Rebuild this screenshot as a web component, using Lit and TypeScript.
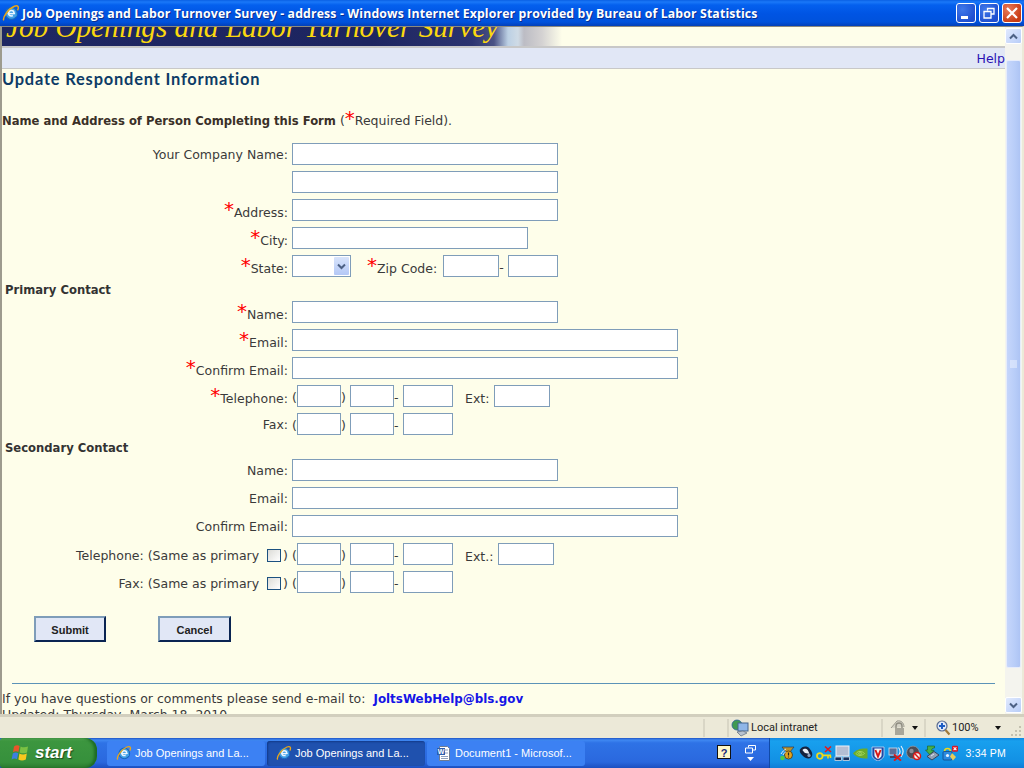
import { LitElement, html, css, svg } from "lit";
import { customElement } from "lit/decorators.js";

const ieIcon = (s: number) => html`<svg width=${s} height=${s} viewBox="0 0 16 16" class="ic">
  <circle cx="8.3" cy="8.4" r="5.3" fill="#3f9fe6" stroke="#1a66bd" stroke-width="1.1"/>
  <circle cx="8.3" cy="8.2" r="2.4" fill="none" stroke="#eaf6ff" stroke-width="1.4"/>
  <rect x="5" y="7.9" width="6.6" height="1.3" fill="#eaf6ff"/>
  <rect x="9.6" y="9.2" width="3.4" height="1.7" fill="#3f9fe6"/>
  <path d="M1.6 14.6C.2 12.2 5.6 4.2 11 2c3.2-1.2 4.4.6 2.8 3.6" fill="none" stroke="#eaa618" stroke-width="1.3"/>
</svg>`;

const flag = html`<svg width="20" height="18" viewBox="0 0 20 18" class="ic">
  <path d="M4 2.5C6 1 8 1 9.6 2L8.4 8C6.8 7 5 7 3 8.2z" fill="#e8552a"/>
  <path d="M10.6 2.4C13 3.6 15.4 3.4 18 2.4L17 8.4c-2.6 1.2-5 1.2-7.4 0z" fill="#7ac143"/>
  <path d="M2.8 9.4C4.8 8.2 6.6 8.2 8.2 9.2L7 15.2C5.4 14.2 3.6 14.2 1.6 15.4z" fill="#3d7fe0"/>
  <path d="M9.4 9.6c2.4 1.2 4.8 1.2 7.4 0L15.8 15.6c-2.6 1.2-5 1.2-7.4 0z" fill="#f7c81e"/>
</svg>`;

const wordIcon = html`<svg width="16" height="16" viewBox="0 0 16 16" class="ic">
  <path d="M3.5 1.5h8l2 2v12h-10z" fill="#fff" stroke="#6d7c94"/>
  <path d="M9 5h3M9 8h3M5 11.5h7M5 13.5h7" stroke="#8fa0bd"/>
  <rect x="1" y="3" width="8" height="7" fill="#2c5fb0"/>
  <text x="5" y="9" font-size="7" font-weight="bold" font-family="Liberation Sans" text-anchor="middle" fill="#fff">W</text>
</svg>`;

const chevDown = html`<svg width="9" height="7"><path d="M1 1.5l3.5 3.5L8 1.5" fill="none" stroke="#4d6185" stroke-width="2"/></svg>`;
const chevUp = html`<svg width="9" height="7"><path d="M1 5.5L4.5 2 8 5.5" fill="none" stroke="#4d6185" stroke-width="2"/></svg>`;

const trayIcons = [
  svg`<path d="M2 2h12l-4 5v5H6V7z" fill="#b8912c" stroke="#2a3a5a" stroke-width=".7"/><circle cx="8.5" cy="10" r="4" fill="#e2a520" stroke="#3a2a10" stroke-width=".7"/><path d="M8.5 7.5v3M8.5 11.5v1" stroke="#222" stroke-width="1.2"/><circle cx="2.5" cy="13" r="2.3" fill="#4cc94c"/><path d="M1 9c2-3 3-4 5-5M3 10c1-2 2-3 3-3" stroke="#dfe8f6" fill="none"/>`,
  svg`<path d="M2 4.5C4 1 9 .5 11.5 3.5 14 6.5 15.5 10 13 12.5c-2.5 2-6 .5-8-1.5S1 7 2 4.5z" fill="#16233e"/><path d="M4.4 5C6 3 9 3.4 10 5.4l1.5 3.4C9 8 7.4 8.6 6.4 7.4z" fill="#e8eef6"/><circle cx="11" cy="10.4" r="1.6" fill="#8ea4c4"/>`,
  svg`<circle cx="3.8" cy="11" r="2.8" fill="none" stroke="#f0d818" stroke-width="1.8"/><path d="M6.5 10.4h8.5M12 10.6v3M14.5 10.6v2.4" stroke="#f0d818" stroke-width="1.6"/><path d="M9 1.5l6 5.5M15 1.5L9 7" stroke="#e81818" stroke-width="1.6"/>`,
  svg`<rect x="2" y="1" width="13" height="10" fill="#b4bfd4" stroke="#eef2f8"/><rect x="1" y="12" width="6.5" height="3.6" fill="#16315e" stroke="#eef2f8" stroke-width=".7"/><rect x="9" y="12" width="6.5" height="3.6" fill="#16315e" stroke="#eef2f8" stroke-width=".7"/>`,
  svg`<path d="M1 8.5C4 4 10 3 15.5 3.5v10C10 13.6 5 13 1 8.5z" fill="#6bab2c"/><path d="M4 8.5C6 6 10 5.6 12.5 8.5 10 11 6 11 4 8.5z" fill="none" stroke="#a8d85c"/><path d="M6.5 8.5c1-1.2 2.6-1.2 3.6 0-1 1.1-2.6 1.1-3.6 0z" fill="none" stroke="#a8d85c"/>`,
  svg`<path d="M2 2h12v8c0 3-3.5 5-6 6-2.5-1-6-3-6-6z" fill="#1c4aa8" stroke="#d8e4f8" stroke-width=".7"/><path d="M4.4 3.5h7.2v6.4c0 2-2 3.4-3.6 4.2-1.6-.8-3.6-2.2-3.6-4.2z" fill="#f2f2f2"/><path d="M5.4 5l2.6 6.4L10.6 5" fill="none" stroke="#d81818" stroke-width="1.9"/>`,
  svg`<rect x="1" y="3" width="8" height="7" fill="#5a6f98" stroke="#d8dfec" stroke-width=".8"/><rect x="2" y="11" width="7" height="2" fill="#3a4a6a"/><path d="M10.5 2.5c2 2.5 2 5.5 0 8M13 1c2.6 3.4 2.6 7.6 0 11" fill="none" stroke="#eef3fa" stroke-width="1.1"/><path d="M6 9.5l7 6.2M13 9.5l-7 6.2" stroke="#e01818" stroke-width="1.8"/>`,
  svg`<circle cx="7" cy="7.5" r="6.4" fill="#4c4c56" stroke="#9aa0ac" stroke-width=".7"/><circle cx="5.5" cy="6" r="2.2" fill="#8a8e98"/><circle cx="11" cy="11" r="3.5" fill="#f6f0f0" stroke="#d81818" stroke-width="1.5"/><path d="M8.8 8.8l4.4 4.4" stroke="#d81818" stroke-width="1.5"/>`,
  svg`<path d="M3.5 1v4h-2l4.5 5 4-4.6H7.6C7.6 3.6 9 3 10.5 3V1z" fill="#46b04a" stroke="#1d5c20" stroke-width=".6"/><path d="M3 11.5l7-5 5 3.5-7 5z" fill="#93a0b4" stroke="#2c3444" stroke-width=".8"/><path d="M7 11l3-2" stroke="#dfe6f0"/>`,
  svg`<path d="M2.5 6.5a3 3 0 0 1 6 0" fill="none" stroke="#f0d818" stroke-width="1.6"/><rect x="1" y="6.5" width="9" height="8.5" rx="1" fill="#2a8ae0" stroke="#123e78" stroke-width=".7"/><circle cx="5.5" cy="10.5" r="1.6" fill="#e8f2ff"/><path d="M10 8l4 4-3 3.5-3-4z" fill="#e8cc5a"/><rect x="10" y="0.8" width="6" height="6" rx="1.2" fill="#d81828"/><path d="M11.6 2.4l2.8 2.8M14.4 2.4l-2.8 2.8" stroke="#fff" stroke-width="1.1"/>`,
];

const star = html`<span class="req">*</span>`;
const input = (cls: string) => html`<span class="in ${cls}"></span>`;
const phone = () => html`<span class="ph"><span class="paren">(</span>${input("w44")}<span class="paren close">)</span>${input("w44")}<span class="dash">-</span>${input("w50")}</span>`;

@customElement("app-root")
export class AppRoot extends LitElement {
  static styles = css`
    :host { display: block; width: 1024px; height: 768px; overflow: hidden; font-family: "DejaVu Sans", Verdana, sans-serif; font-size: 12.5px; color: #3a3a3a; }
    .win { display: flex; flex-direction: column; height: 768px; }
    .ic { display: block; flex: none; }

    .title { height: 26px; flex: none; display: flex; align-items: center; padding-left: 2px; gap: 2px; color: #fff; font: bold 12.3px "Open Sans", "DejaVu Sans", sans-serif;
      background: linear-gradient(#0a60e4 0, #1a78f8 2px, #0460ee 5px, #0054e3 14px, #0052dc 22px, #0340b8 26px); }
    .title .txt { flex: 1; text-shadow: 1px 1px 0 #0a2f90; white-space: nowrap; letter-spacing: .13px; }
    .wb { display: flex; gap: 3px; padding-right: 2px; }
    .btn { width: 20px; height: 20px; border: 1px solid #fff; border-radius: 3px; box-sizing: border-box; background: radial-gradient(circle at 30% 30%, #3f78ea, #1f4fd0 75%); display: flex; }
    .btn.x { background: radial-gradient(circle at 30% 30%, #e87a5a, #c83c14 75%); }

    .main { flex: 1; display: flex; min-height: 0; background: #fefeea; border-top: 1px solid #8c8a7e; border-left: 2px solid #9d9b8e; border-right: 2px solid #ece9d8; }
    .page { flex: 1; min-width: 0; position: relative; overflow: hidden; display: flex; flex-direction: column; }
    .banner { height: 19px; flex: none; display: flex; overflow: hidden; }
    .banner .img { width: 560px; flex: none; background: linear-gradient(90deg, #1f2762 0, #1d2560 370px, #2c3470 470px, #4a5284 492px, #bcd0e4 506px, #cfdbe6 516px, #bcbcc4 522px, #d4d2d2 540px, #fefeea 560px); color: #fbd80e; font: italic 29.2px/1 "Liberation Serif", serif; white-space: nowrap; padding-left: 4px; box-sizing: border-box; overflow: hidden; }
    .banner .img span { display: block; margin-top: -14px; }
    .nav { height: 20px; flex: none; background: #e1e7f6; border-top: 2px solid #c8c8c8; border-bottom: 1px solid #c8c8c8; display: flex; justify-content: flex-end; align-items: center; font-size: 12.5px; }
    .nav a { color: #2a12b4; }

    .content { flex: 1; min-height: 0; overflow: hidden; }
    h1 { margin: 0; font: bold 16.4px/20px Lato, "Open Sans", sans-serif; color: #0d3b66; height: 22px; letter-spacing: .82px; }
    .intro { margin-top: 21px; height: 22px; line-height: 18px; white-space: nowrap; }
    .intro b { color: #3a3028; font-size: 11.6px; }
    .req { color: #f00; font-size: 20px; line-height: 0; position: relative; top: -1px; }
    .intro .req { top: 0; }

    .form { display: flex; flex-direction: column; gap: 6px; padding-top: 9px; }
    .row { display: flex; height: 22px; align-items: center; white-space: nowrap; }
    .lb { width: 290px; flex: none; box-sizing: border-box; padding-right: 4px; text-align: right; line-height: 24px; height: 22px; }
    .lb.st { line-height: 28px; }
    .lb.mid { line-height: 26px; }
    .sec { font-weight: bold; font-size: 11.6px; height: 18px; line-height: 18px; padding-left: 3px; margin: -2px 0 -4px; color: #333; }
    .in { display: block; flex: none; height: 22px; box-sizing: border-box; border: 1px solid #7f9db9; background: #fff; }
    .w266 { width: 266px; } .w236 { width: 236px; } .w386 { width: 386px; } .w56 { width: 56px; } .w50 { width: 50px; } .w44 { width: 44px; }
    .ph { display: flex; align-items: center; }
    .paren { width: 5px; margin-top: 2px; }
    .close { width: 9px; }
    .dash { width: 9px; margin-top: 2px; }
    .after { line-height: 28px; height: 22px; }
    .ml16 { margin-left: 16px; } .ml12 { margin-left: 12px; }
    .s6 { width: 6px; flex: none; } .s5 { width: 5px; flex: none; }
    .sel { width: 59px; height: 22px; box-sizing: border-box; border: 1px solid #7f9db9; background: #fff; position: relative; flex: none; }
    .sel i { position: absolute; right: 1px; top: 1px; bottom: 1px; width: 15px; background: linear-gradient(#d8e4fb, #b4c8f6); border-radius: 1px; display: flex; align-items: center; justify-content: center; }
    .cb { display: inline-block; width: 14px; height: 13px; box-sizing: border-box; border: 1px solid #1c5180; background: linear-gradient(135deg, #dcdcd7, #fff); vertical-align: -2px; margin: 0 2px 0 8px; }

    .acts { display: flex; gap: 52px; padding-left: 32px; margin-top: 23px; }
    .sub { box-sizing: border-box; height: 26px; background: #e1e7f6; border-style: solid; border-width: 2px; border-color: #7f9db9 #0a2452 #0a2452 #7f9db9; font: bold 11px/24px "Liberation Sans", Arial, sans-serif; color: #222; text-align: center; }
    .w72 { width: 72px; } .w73 { width: 73px; }
    .foot { position: absolute; left: 0; right: 0; bottom: -9px; height: 32px; white-space: nowrap; line-height: 16px; }
    .foot a { color: #1414e6; font-weight: bold; font-size: 11.9px; margin-left: 8px; }
    .hr { position: absolute; left: 10px; right: 10px; top: 656px; height: 1px; background: #5b93b8; }

    .sb { width: 17px; flex: none; background: #f4f4ee; display: flex; flex-direction: column; padding: 1px 0; box-sizing: border-box; }
    .sbtn { height: 16px; flex: none; background: linear-gradient(135deg, #e1eafe, #b8cdf8); border: 1px solid #fff; border-radius: 2px; display: flex; align-items: center; justify-content: center; box-sizing: border-box; }
    .thumb { height: 608px; margin: 16px 1px 0; flex: none; background: linear-gradient(90deg, #c6d6fb, #b8cdf8 60%, #aec4f4); border: 1px solid #e6ecfb; border-radius: 2px; box-sizing: border-box; display: flex; align-items: center; justify-content: center; }
    .spacer { flex: 1; }

    .status { height: 24px; flex: none; background: #ece9d8; border-top: 3px solid #d2cfbe; box-sizing: border-box; display: flex; align-items: center; padding-left: 703px; font: 11px Roboto, "Liberation Sans", sans-serif; color: #222; }
    .c { height: 18px; display: flex; align-items: center; border-left: 2px solid #d9d6c6; box-sizing: border-box; flex: none; position: relative; }
    .c24 { width: 24px; }
    .zone { width: 154px; padding-left: 2px; gap: 2px; }
    .lock { width: 43px; padding-left: 7px; gap: 6px; }
    .zoom { width: 100px; padding-left: 10px; gap: 1px; }
    .zoom .drop { margin-left: 15px; }
    .tri { width: 0; height: 0; border: 3.5px solid transparent; border-top: 4px solid #111; border-bottom: 0; display: block; flex: none; }
    .grip { position: absolute; right: 2px; bottom: 0; }

    .tb { height: 30px; flex: none; display: flex; align-items: center; gap: 2px; background: linear-gradient(#1f54c4 0, #3f88f2 2px, #2e72e6 5px, #2a68de 24px, #1c4fc0 30px); color: #fff; font: 11px "Liberation Sans", Arial, sans-serif; }
    .start { width: 97px; height: 30px; flex: none; box-sizing: border-box; display: flex; align-items: center; padding-left: 10px; gap: 5px; margin-right: 8px; color: #fff; font: italic bold 17px "Liberation Sans", Arial, sans-serif; text-shadow: 1px 1px 1px #1c4a1c; border-radius: 3px 12px 12px 3px; background: linear-gradient(#5cb05c 0, #3c963f 3px, #36903c 24px, #2c7c30 30px); box-shadow: inset -3px 0 3px #1d6b24; }
    .task { height: 25px; box-sizing: border-box; width: 158px; flex: none; display: flex; align-items: center; gap: 3px; padding-left: 9px; border-radius: 3px; background: #3c81f3; white-space: nowrap; }
    .task.on { background: #1f51ae; box-shadow: inset 1px 1px 2px #123a88; }
    .notif { margin-left: auto; display: flex; align-items: center; gap: 13px; padding-right: 11px; }
    .rest { display: flex; flex-direction: column; align-items: center; gap: 3px; }
    .tray { width: 255px; height: 30px; flex: none; box-sizing: border-box; background: linear-gradient(#1286e0 0, #18a0ee 3px, #1290e4 24px, #0f7cd6 30px); border-left: 1px solid #0f4aa8; display: flex; align-items: center; padding-left: 10px; gap: 2px; }
    .time { margin-left: auto; padding-right: 18px; letter-spacing: .2px; font-size: 10.5px; }
  `;

  render() {
    return html`<div class="win">
      <div class="title">
        ${ieIcon(18)}
        <span class="txt">Job Openings and Labor Turnover Survey - address - Windows Internet Explorer provided by Bureau of Labor Statistics</span>
        <div class="wb">
          <div class="btn"><svg width="18" height="18"><rect x="4" y="12" width="7" height="3" fill="#fff"/></svg></div>
          <div class="btn"><svg width="18" height="18"><path d="M7.5 6.5V4.5H14V10H11.5M4 7.5h7V14H4z" fill="none" stroke="#fff" stroke-width="1.3"/></svg></div>
          <div class="btn x"><svg width="18" height="18"><path d="M4 4l10 10M14 4L4 14" stroke="#fff" stroke-width="2.2"/></svg></div>
        </div>
      </div>
      <div class="main">
        <div class="page">
          <div class="banner"><div class="img"><span>Job Openings and Labor Turnover Survey</span></div></div>
          <div class="nav"><a>Help</a></div>
          <div class="content">
            <h1>Update Respondent Information</h1>
            <div class="intro"><b>Name and Address of Person Completing this Form</b> (${star}Required Field).</div>
            <div class="form">
              <div class="row"><span class="lb">Your Company Name:</span>${input("w266")}</div>
              <div class="row"><span class="lb"></span>${input("w266")}</div>
              <div class="row"><span class="lb st">${star}Address:</span>${input("w266")}</div>
              <div class="row"><span class="lb st">${star}City:</span>${input("w236")}</div>
              <div class="row"><span class="lb st">${star}State:</span>
                <span class="sel"><i>${chevDown}</i></span>
                <span class="after ml16">${star}Zip Code:</span>
                <span class="s6"></span>${input("w56")}<span class="dash">-</span>${input("w50")}
              </div>
              <div class="sec">Primary Contact</div>
              <div class="row"><span class="lb st">${star}Name:</span>${input("w266")}</div>
              <div class="row"><span class="lb st">${star}Email:</span>${input("w386")}</div>
              <div class="row"><span class="lb st">${star}Confirm Email:</span>${input("w386")}</div>
              <div class="row"><span class="lb st">${star}Telephone:</span>${phone()}<span class="after ml12">Ext:</span><span class="s5"></span>${input("w56")}</div>
              <div class="row"><span class="lb">Fax:</span>${phone()}</div>
              <div class="sec">Secondary Contact</div>
              <div class="row"><span class="lb">Name:</span>${input("w266")}</div>
              <div class="row"><span class="lb">Email:</span>${input("w386")}</div>
              <div class="row"><span class="lb">Confirm Email:</span>${input("w386")}</div>
              <div class="row"><span class="lb mid">Telephone: (Same as primary<span class="cb"></span>)</span>${phone()}<span class="after ml12">Ext.:</span><span class="s5"></span>${input("w56")}</div>
              <div class="row"><span class="lb mid">Fax: (Same as primary<span class="cb"></span>)</span>${phone()}</div>
            </div>
            <div class="acts">
              <div class="sub w72">Submit</div>
              <div class="sub w73">Cancel</div>
            </div>
          </div>
          <div class="hr"></div>
          <div class="foot">If you have questions or comments please send e-mail to:<a>JoltsWebHelp@bls.gov</a><br>Updated: Thursday, March 18, 2010</div>
        </div>
        <div class="sb">
          <div class="sbtn">${chevUp}</div>
          <div class="thumb"><svg width="7" height="8"><path d="M0 1h7M0 3h7M0 5h7M0 7h7" stroke="#eef3fe"/></svg></div>
          <div class="spacer"></div>
          <div class="sbtn">${chevDown}</div>
        </div>
      </div>
      <div class="status">
        <div class="c c24"></div>
        <div class="c zone">
          <svg width="18" height="18" viewBox="0 0 18 18" class="ic">
            <circle cx="6" cy="6" r="5" fill="#3f9a52" stroke="#2a5f9c" stroke-width=".8"/>
            <rect x="7" y="4" width="10" height="8" fill="#8fb6e8" stroke="#44648e"/>
            <path d="M6 13l6-1 4 2-6 3z" fill="#b9c2cf" stroke="#5c6a7c" stroke-width=".7"/>
          </svg>
          <span>Local intranet</span>
        </div>
        <div class="c lock">
          <svg width="16" height="17" viewBox="0 0 16 17" class="ic">
            <path d="M1 9l6-7c4-1 7 2 7 6" fill="#d4d2c6" stroke="#9c9a8e"/>
            <path d="M6 9V7a3 3 0 0 1 6 0v2" fill="none" stroke="#8e8c80" stroke-width="1.4"/>
            <rect x="5" y="9" width="9" height="7" fill="#a8a69a"/>
          </svg>
          <span class="tri"></span>
        </div>
        <div class="c zoom">
          <svg width="15" height="16" viewBox="0 0 15 16" class="ic">
            <circle cx="6" cy="6" r="5" fill="#dfe8f8" stroke="#5a6c90" stroke-width="1.2"/>
            <path d="M3 6h6M6 3v6" stroke="#1c5cc4" stroke-width="2"/>
            <path d="M9.5 10l4 4.5" stroke="#a07a3c" stroke-width="2.2"/>
          </svg>
          <span>100%</span>
          <span class="tri drop"></span>
          <svg class="grip" width="12" height="12" viewBox="0 0 12 12">
            <path d="M9 1h2v2H9zM5 5h2v2H5zM9 5h2v2H9zM1 9h2v2H1zM5 9h2v2H5zM9 9h2v2H9z" fill="#c4c1b0"/>
          </svg>
        </div>
      </div>
      <div class="tb">
        <div class="start">${flag}<span>start</span></div>
        <div class="task">${ieIcon(16)}<span>Job Openings and La...</span></div>
        <div class="task on">${ieIcon(16)}<span>Job Openings and La...</span></div>
        <div class="task">${wordIcon}<span>Document1 - Microsof...</span></div>
        <div class="notif">
          <svg width="15" height="16" viewBox="0 0 15 16" class="ic">
            <rect x=".5" y=".5" width="13" height="13" fill="#fff8c8" stroke="#111"/>
            <text x="7" y="11.5" font-size="11" font-weight="bold" font-family="Liberation Sans" text-anchor="middle" fill="#1a2a78">?</text>
          </svg>
          <div class="rest">
            <svg width="11" height="9" viewBox="0 0 11 9" class="ic"><path d="M3.5 2.5v-2h7v4.5H8M.5 3h7v5h-7z" fill="none" stroke="#fff"/></svg>
            <svg width="7" height="4" class="ic"><path d="M0 0h7L3.5 4z" fill="#fff"/></svg>
          </div>
        </div>
        <div class="tray">
          ${trayIcons.map((p) => html`<svg width="16" height="16" viewBox="0 0 16 16" class="ic">${p}</svg>`)}
          <span class="time">3:34 PM</span>
        </div>
      </div>
    </div>`;
  }
}
